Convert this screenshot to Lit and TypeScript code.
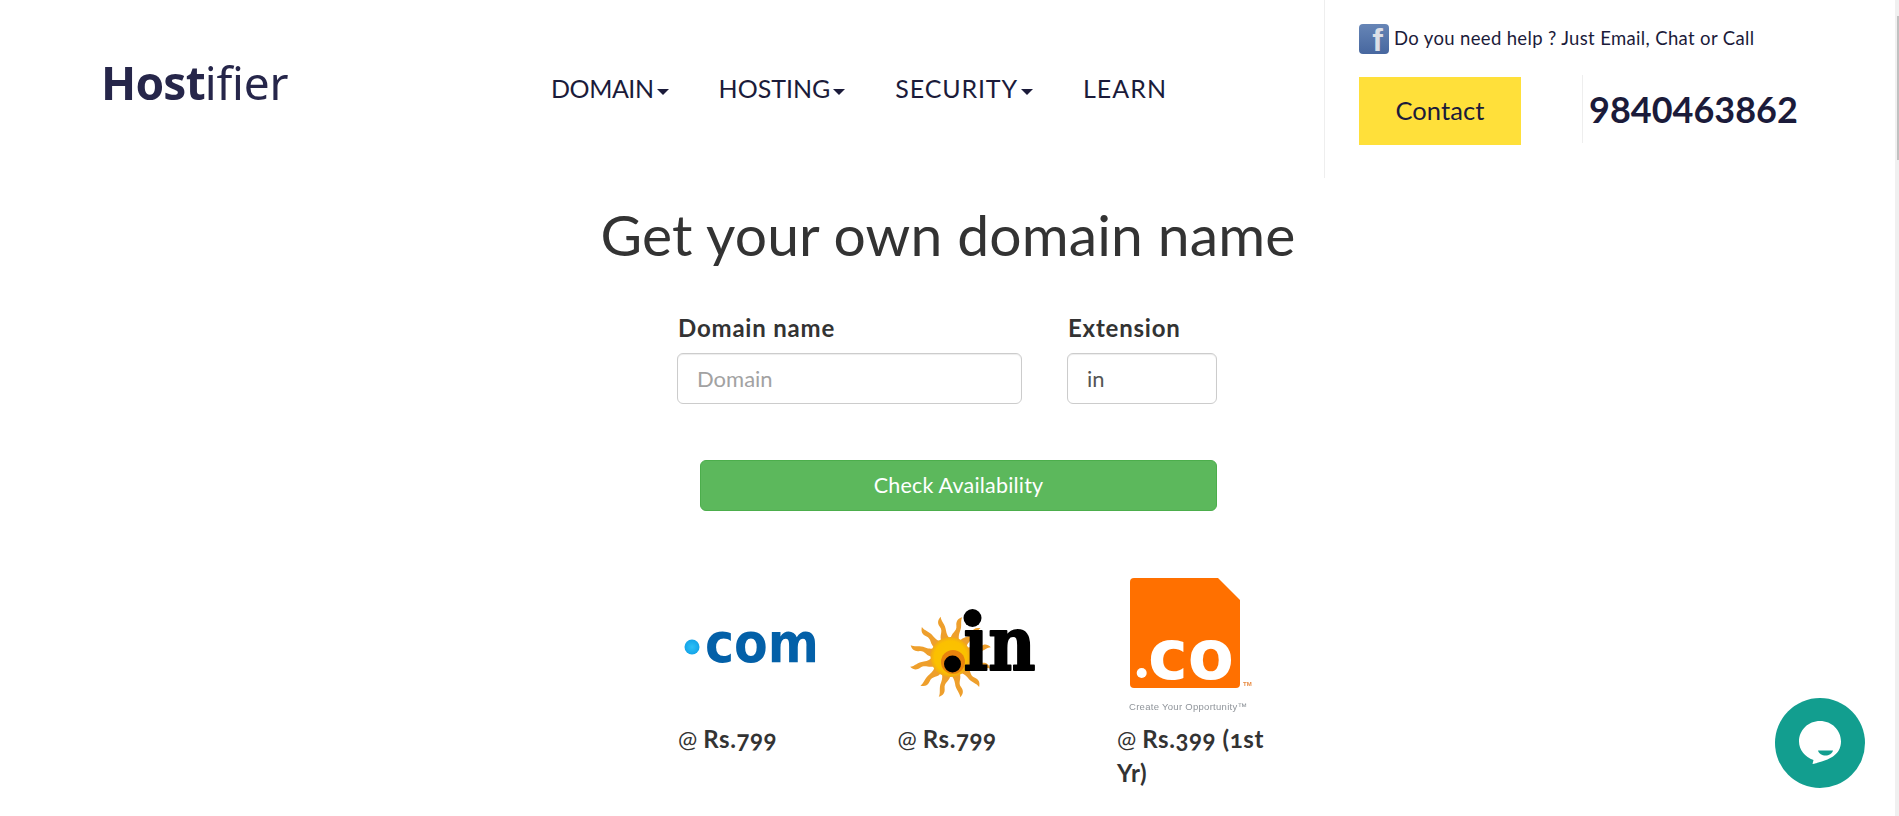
import { LitElement, html, css, svg } from "lit";
import { customElement } from "lit/decorators.js";

const rays = Array.from({ length: 12 }, (_, i) => {
  const a = 15 + i * 30;
  return svg`<path transform="translate(42.5 51) rotate(${a})" d="M-4.500 -17 C-6 -24 0 -26 -2.500 -32 C-4 -36 -3 -39 1 -41.500 C0 -37 3.500 -33 2.500 -27 C2 -23 3 -20 4.500 -17 Z" fill="#ee9f2c"/>`;
});

@customElement("app-root")
export class AppRoot extends LitElement {
  static styles = css`
    :host { display: block; position: relative; height: 816px; overflow: hidden; background: #fff; font-family: "Lato", "Liberation Sans", sans-serif; color: #333; }
    .header { display: flex; height: 178px; }
    .logo { width: 551px; padding: 55px 0 0 101px; box-sizing: border-box; font-family: "Noto Sans", sans-serif; font-size: 46px; line-height: 54px; color: #26264a; letter-spacing: -0.2px; flex: none; filter: blur(0.4px); }
    .logo b { font-weight: 700; letter-spacing: -0.8px; }
    .nav { display: flex; gap: 50px; width: 773px; box-sizing: border-box; padding-top: 74px; font-size: 25px; line-height: 28px; color: #1b1b3a; flex: none; }
    .n1 { letter-spacing: -0.45px; }
    .n3 { letter-spacing: 0.85px; }
    .n4 { letter-spacing: 1.08px; }
    .caret { display: inline-block; width: 0; height: 0; margin-left: 3px; vertical-align: middle; letter-spacing: 0; border-top: 6px solid #1b1b3a; border-left: 6px solid transparent; border-right: 6px solid transparent; }
    .side { border-left: 1px solid #eeeeee; padding: 24px 0 0 34px; flex: 1; }
    .help { display: flex; align-items: center; gap: 5px; height: 28px; font-size: 18.5px; letter-spacing: 0.35px; color: #1b1b3a; }
    .fb { width: 30px; height: 30px; margin-bottom: -2px; border-radius: 4px; background: linear-gradient(#6685b6, #47679f); color: #dcdfe6; font: 700 32px/27px "Liberation Sans", sans-serif; letter-spacing: 0; text-align: right; padding: 3px 6px 0 0; box-sizing: border-box; flex: none; }
    .cta { display: flex; margin-top: 25px; }
    .contact { width: 162px; height: 68px; background: #ffe03a; color: #1b1b3a; font-size: 25.5px; letter-spacing: 0.1px; line-height: 66px; text-align: center; }
    .phone { margin: -2px 0 0 61px; height: 68px; border-left: 1px solid #eeeeee; padding-left: 6px; font-size: 36px; line-height: 69px; font-weight: 700; color: #1b1b3a; }
    h1 { margin: 26px 0 0; padding-right: 3px; text-align: center; font-size: 57px; line-height: 60px; letter-spacing: 0.15px; font-weight: 400; color: #333; }
    .form { margin: 0 0 0 677px; width: 540px; }
    .fields { display: flex; gap: 45px; margin-top: 51px; }
    label { display: block; font-size: 24px; letter-spacing: 0.8px; line-height: 26px; font-weight: 700; margin: 0 0 12px 1px; color: #333; white-space: nowrap; }
    .input { height: 51px; box-sizing: border-box; border: 1px solid #ccc; border-radius: 6px; padding: 0 19px; font-size: 22px; line-height: 49px; color: #555; box-shadow: inset 0 1px 1px rgba(0,0,0,.075); }
    .domain { width: 345px; color: #a2a2a2; }
    .ext { width: 150px; }
    .check { margin: 56px 0 0 23px; height: 51px; box-sizing: border-box; border: 1px solid #4cae4c; border-radius: 6px; background: #5cb85c; color: #fff; font-size: 21.5px; letter-spacing: 0.2px; line-height: 49px; text-align: center; }
    .tlds { display: grid; grid-template-columns: 219.5px 219.5px 160px; margin: 65px 0 0 678px; }
    .art { height: 146px; position: relative; }
    .price { margin: 0; font-size: 23px; line-height: 33px; color: #333; font-feature-settings: "onum"; }
    .price b { font-weight: 700; font-size: 24px; letter-spacing: 0.6px; }
    .art svg { position: absolute; display: block; overflow: visible; filter: blur(0.5px); }
    .com { left: 4px; top: 44px; }
    .in { left: 10px; top: 30px; }
    .co { left: 13px; top: 2px; }
    .chat { position: absolute; left: 1775px; top: 698px; width: 90px; height: 90px; border-radius: 50%; background: #129e8f; }
    .chat svg { display: block; }
    .bar { position: absolute; top: 0; right: 0; width: 4px; height: 816px; background: #f0f0f0; }
    .thumb { margin: 0 0 0 2px; position: relative; top: 16px; width: 2px; height: 144px; background: #c1c1c1; }
  `;

  render() {
    return html`
      <div class="header">
        <div class="logo"><b>Host</b>ifier</div>
        <div class="nav">
          <span class="n1">DOMAIN<i class="caret"></i></span>
          <span class="n2">HOSTING<i class="caret"></i></span>
          <span class="n3">SECURITY<i class="caret"></i></span>
          <span class="n4">LEARN</span>
        </div>
        <div class="side">
          <div class="help"><div class="fb">f</div>Do you need help ? Just Email, Chat or Call</div>
          <div class="cta">
            <div class="contact">Contact</div>
            <div class="phone">9840463862</div>
          </div>
        </div>
      </div>
      <h1>Get your own domain name</h1>
      <div class="form">
        <div class="fields">
          <div><label>Domain name</label><div class="input domain">Domain</div></div>
          <div><label>Extension</label><div class="input ext">in</div></div>
        </div>
        <div class="check">Check Availability</div>
      </div>
      <div class="tlds">
        <div>
          <div class="art">
            <svg class="com" width="140" height="50" viewBox="0 0 140 50">
              <defs><radialGradient id="dot"><stop offset="0" stop-color="#2ec0f7"/><stop offset="1" stop-color="#14a4e8"/></radialGradient></defs>
              <circle cx="10" cy="27" r="7.5" fill="url(#dot)"/>
              <text x="23" y="42" font-family="DejaVu Sans, sans-serif" font-weight="700" font-size="56" textLength="114" lengthAdjust="spacingAndGlyphs" fill="#0360a8">com</text>
            </svg>
          </div>
          <p class="price">@ <b>Rs.799</b></p>
        </div>
        <div>
          <div class="art">
            <svg class="in" width="130" height="76" viewBox="0 0 130 76">
              <defs><radialGradient id="sun"><stop offset="0" stop-color="#fbc400"/><stop offset=".8" stop-color="#fbc000"/><stop offset="1" stop-color="#f2a818"/></radialGradient></defs>
              ${rays}
              <circle cx="42.500" cy="51" r="20" fill="url(#sun)"/>
              <circle cx="45" cy="56" r="12" fill="#e8830c"/>
              <circle cx="44.500" cy="58" r="8.500" fill="#000"/>
              <circle cx="64.500" cy="12" r="9" fill="#000"/>
              <text x="55.500" y="64" font-family="DejaVu Serif, serif" font-weight="700" font-size="74" textLength="72" lengthAdjust="spacingAndGlyphs" fill="#000" stroke="#000" stroke-width="2" stroke-linejoin="round">ın</text>
            </svg>
          </div>
          <p class="price">@ <b>Rs.799</b></p>
        </div>
        <div>
          <div class="art">
            <svg class="co" width="125" height="140" viewBox="0 0 125 140">
              <path d="M4 0 H88 L110 22 V106 Q110 110 106 110 H4 Q0 110 0 106 V4 Q0 0 4 0 Z" fill="#ff7000"/>
              <circle cx="11.700" cy="95" r="5" fill="#fff"/>
              <text x="18" y="101" font-family="DejaVu Sans, sans-serif" font-weight="700" font-size="70" textLength="86" lengthAdjust="spacingAndGlyphs" fill="#fff">co</text>
              <text x="113" y="108" font-family="Liberation Sans, sans-serif" font-weight="700" font-size="6" fill="#e88a40">TM</text>
              <text x="-1" y="132" font-family="Liberation Sans, sans-serif" font-size="9.500" textLength="118" fill="#8f949a">Create Your Opportunity™</text>
            </svg>
          </div>
          <p class="price">@ <b>Rs.399 (1st Yr)</b></p>
        </div>
      </div>
      <div class="chat">
        <svg width="90" height="90" viewBox="0 0 90 90">
          <path d="M45 23 C56.700 23 66 32 66 43.500 C66 50 63 55 58 58.500 C51 63 42 65 37.500 66 L38.500 62 C30 59 24 52 24 43.500 C24 32 33.300 23 45 23 Z" fill="#fff"/>
          <path d="M43 52.500 H58 C57 56 54 57.500 50.500 57.500 C47 57.500 44 56 43 52.500 Z" fill="#129e8f"/>
        </svg>
      </div>
      <div class="bar"><div class="thumb"></div></div>
    `;
  }
}
